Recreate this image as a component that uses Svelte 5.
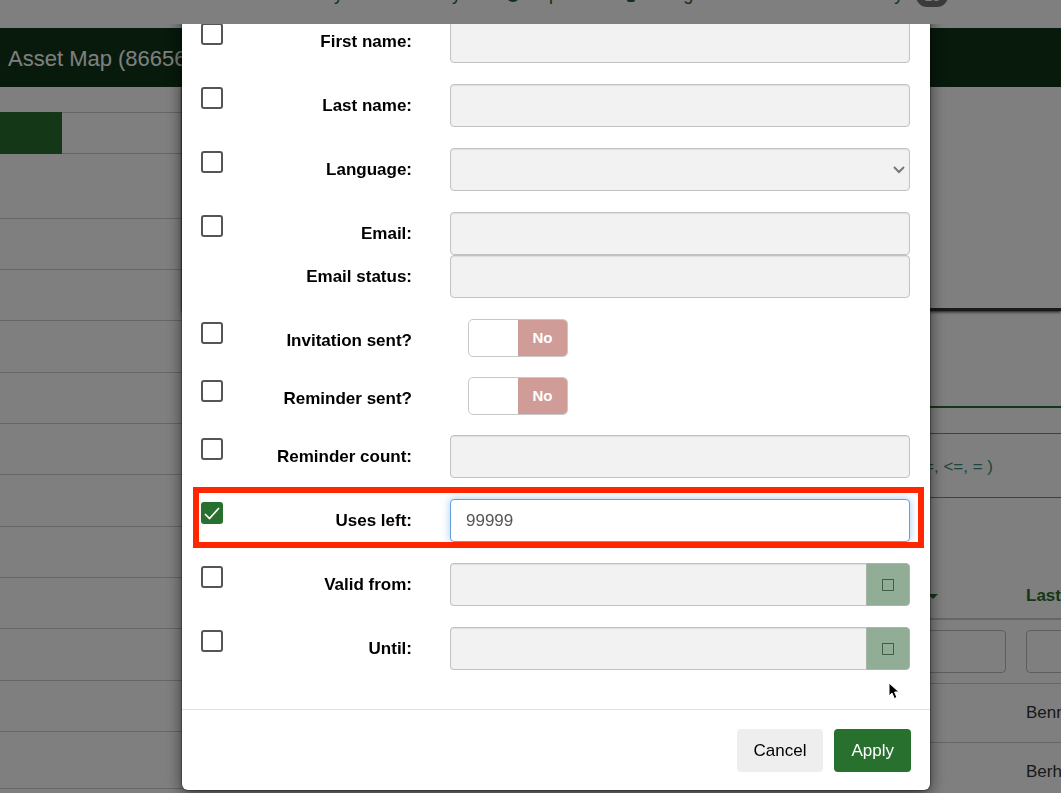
<script>
  const sidebarRows = Array.from({ length: 12 }, (_, i) => i);

  let fields = $state([
    { id: 'firstname', label: 'First name:', kind: 'text', on: false, value: '' },
    { id: 'lastname', label: 'Last name:', kind: 'text', on: false, value: '' },
    { id: 'language', label: 'Language:', kind: 'select', on: false, value: '' },
    { id: 'email', label: 'Email:', kind: 'text', on: false, value: '', joined: true },
    { id: 'emailstatus', label: 'Email status:', kind: 'text', noCheck: true, on: false, value: '' },
    { id: 'sent', label: 'Invitation sent?', kind: 'switch', on: false, value: false },
    { id: 'remindersent', label: 'Reminder sent?', kind: 'switch', on: false, value: false },
    { id: 'remindercount', label: 'Reminder count:', kind: 'text', on: false, value: '' },
    { id: 'usesleft', label: 'Uses left:', kind: 'text', on: true, value: '99999', marked: true },
    { id: 'validfrom', label: 'Valid from:', kind: 'date', on: false, value: '' },
    { id: 'validuntil', label: 'Until:', kind: 'date', on: false, value: '' }
  ]);
</script>

<div class="page">
  <nav class="topbar">
    <a href="#create">Create survey</a>
    <a href="#list">List surveys</a>
    <a href="#help" class="help"><span class="dot"></span>Help</a>
    <a href="#config" class="config"><span class="cog"></span>Configuration</a>
    <a href="#active" class="active-surveys">Active surveys <span class="count">13</span></a>
    <a href="#user" class="user">admin</a>
  </nav>
  <header class="titlebar">Asset Map (866564)</header>
  <div class="columns">
    <aside>
      <div class="tabs"><span class="tab active"></span><span class="tab"></span></div>
      <ul>
        {#each sidebarRows as row (row)}<li></li>{/each}
      </ul>
    </aside>
    <main>
      <div class="panel"></div>
      <div class="rule"></div>
      <p class="hint">You can use operators in the search filters (eg: &gt;, &lt;, &gt;=, &lt;=, = )</p>
      <table>
        <thead>
          <tr><th class="wide">Action</th><th>Status</th><th>First name<i class="caret"></i></th><th>Last name</th></tr>
          <tr class="filters">
            <td></td>
            <td><input aria-label="Filter status" /></td>
            <td><input aria-label="Filter first name" /></td>
            <td><input aria-label="Filter last name" /></td>
          </tr>
        </thead>
        <tbody>
          <tr><td></td><td></td><td></td><td>Bennett</td></tr>
          <tr><td></td><td></td><td></td><td>Berhane</td></tr>
        </tbody>
      </table>
    </main>
  </div>
</div>

<div class="backdrop">
  <div class="viewport">
    <div class="dialog" role="dialog" aria-modal="true" aria-label="Edit participants">
      <form>
        {#each fields as f (f.id)}
          <div class="row" class:joined={f.joined} class:short={f.kind === 'switch'}>
            {#if f.noCheck}
              <span></span>
            {:else}
              <input type="checkbox" class="check" bind:checked={f.on} aria-label={`Change ${f.label}`} />
            {/if}
            <label for={f.id}>{f.label}</label>
            {#if f.kind === 'text'}
              <input id={f.id} class="field" class:focused={f.on} type="text" disabled={!f.on} bind:value={f.value} />
            {:else if f.kind === 'select'}
              <div class="pick">
                <select id={f.id} class="field" disabled={!f.on} bind:value={f.value}><option value=""></option></select>
                <svg viewBox="0 0 12 8" width="12" height="8"><path d="M1 1l5 5 5-5" fill="none" stroke="#777" stroke-width="2" /></svg>
              </div>
            {:else if f.kind === 'switch'}
              <button type="button" id={f.id} class="switch" role="switch" aria-checked="false" disabled={!f.on}>
                <span></span><span class="off">No</span>
              </button>
            {:else}
              <div class="date">
                <input id={f.id} class="field" type="text" disabled={!f.on} bind:value={f.value} />
                <button type="button" aria-label="Open calendar" disabled={!f.on}><span></span></button>
              </div>
            {/if}
            {#if f.marked}<div class="mark"></div>{/if}
          </div>
        {/each}
      </form>
      <footer>
        <button type="button" class="btn">Cancel</button>
        <button type="button" class="btn primary">Apply</button>
      </footer>
    </div>
  </div>
</div>

<svg class="pointer" viewBox="0 0 12 18" width="12" height="18">
  <path d="M1 1v13l3-3 2.300 5.500 2.600-1.100L6.600 10H11z" fill="#000" stroke="#fff" stroke-width="1" />
</svg>

<style>
  :global(body) {
    margin: 0;
    overflow: hidden;
    background: #fff;
    font: 17px/22px "Liberation Sans", Arial, sans-serif;
  }
  * { box-sizing: border-box; }
  button, input, select { font: inherit; }

  .page { height: 100vh; overflow: hidden; color: #333; }
  .topbar {
    display: flex;
    align-items: flex-start;
    gap: 32px;
    height: 28px;
    padding-left: 231px;
    overflow: hidden;
    font-size: 18px;
    line-height: 24px;
    white-space: nowrap;
  }
  .topbar a { display: flex; margin-top: -18px; color: #265c34; text-decoration: none; }
  .topbar .help { margin-left: -4px; }
  .topbar .config { margin-left: 28px; }
  .topbar .active-surveys, .topbar .user { margin-left: 16px; }
  .dot, .cog { width: 14px; height: 14px; margin: 6px 2px 0 8px; border-radius: 7px; background: #265c34; }
  .cog { width: 8px; margin-right: 6px; border-radius: 2px; }
  .count {
    width: 32px;
    height: 22px;
    margin: 3px 0 0 4px;
    border-radius: 11px;
    background: #777;
    color: #fff;
    font-size: 14px;
    line-height: 22px;
    text-align: center;
  }
  .topbar .user { color: #8a5a3c; }
  .titlebar {
    height: 59px;
    padding-left: 8px;
    background: #0e3418;
    color: #fff;
    font-size: 22px;
    line-height: 62px;
  }
  .columns { display: grid; grid-template-columns: 182px minmax(0, 1fr); }
  aside { padding-top: 25px; }
  .tabs { display: flex; height: 42px; border: solid #ccc; border-width: 1px 0; }
  .tab { flex: 1; }
  .tab.active { flex: 0 0 62px; margin: -1px 0; background: #28702e; }
  ul { margin: 0; padding: 0; list-style: none; }
  li { height: 51px; border-bottom: 1px solid #ccc; }
  li:nth-child(3n + 4) { height: 52px; }
  li:first-child { height: 65px; }
  li:last-child { height: 57px; }

  .panel { height: 224px; border-bottom: 3px solid #333; box-shadow: 0 1px 3px #333; }
  .rule { height: 97px; border-bottom: 2px solid #28702e; }
  .hint {
    margin: 25px 0 0;
    padding: 22px 68px 19px 0;
    overflow: hidden;
    border: solid #4f9c8c;
    border-width: 1px 0;
    color: #3c8a7c;
    text-align: right;
    white-space: nowrap;
  }
  table { width: 1034px; margin-top: 75px; table-layout: fixed; border-collapse: collapse; }
  th, td { height: 59px; padding: 0 10px; border-bottom: 1px solid #ccc; text-align: left; }
  th { width: 200px; height: 46px; border-bottom-width: 2px; color: #28702e; }
  th.wide { width: 434px; }
  .filters td { height: 64px; }
  .filters input {
    display: block;
    width: 100%;
    height: 43px;
    border: 1px solid #bbb;
    border-radius: 4px;
    background: #fff;
  }
  .caret {
    display: inline-block;
    margin-left: 16px;
    border: 5px solid transparent;
    border-top-color: #28702e;
    border-bottom: 0;
    vertical-align: middle;
  }

  .backdrop { position: fixed; inset: 0; background: rgba(0, 0, 0, 0.5); }
  .viewport { height: 100%; padding: 0 131px 0 182px; margin-top: 24px; overflow: hidden; }
  .dialog {
    margin-top: -12px;
    padding-top: 8px;
    border-radius: 6px;
    background: #fff;
    box-shadow: 0 4px 16px rgba(0, 0, 0, 0.6), 0 0 2px #000;
    color: #000;
  }
  form { padding: 0 20px 18px 19px; }
  .row {
    position: relative;
    display: grid;
    grid-template-columns: 22px minmax(0, 227fr) minmax(0, 460fr);
    align-items: start;
    margin-bottom: 21px;
  }
  .row.joined { margin-bottom: 0; }
  .row.short { margin-bottom: 20px; }
  .check {
    appearance: none;
    width: 22px;
    height: 22px;
    margin: 3px 0 0;
    border: 2px solid #555;
    border-radius: 3px;
    background: #fff;
  }
  .check:checked {
    border-color: #28702e;
    background: #28702e url("data:image/svg+xml,%3Csvg xmlns='http://www.w3.org/2000/svg' viewBox='0 0 18 18'%3E%3Cpath d='M2 10l4.500 4.500L16 4' fill='none' stroke='white' stroke-width='1.700'/%3E%3C/svg%3E") center / 18px no-repeat;
  }
  label { padding: 11px 38px 0 0; font-weight: 700; text-align: right; white-space: nowrap; }
  .field {
    display: block;
    width: 100%;
    height: 43px;
    padding: 0 15px;
    border: 1px solid #c2c2c2;
    border-radius: 4px;
    background: #f2f2f2;
    box-shadow: inset 0 1px 1px rgba(0, 0, 0, 0.08);
    color: #555;
    opacity: 1;
    appearance: none;
  }
  .field.focused {
    border-color: #66a0dc;
    outline: 0;
    background: #fff;
    box-shadow: 0 0 8px rgba(102, 175, 233, 0.6);
  }
  .pick { display: grid; align-items: center; }
  .pick > * { grid-area: 1 / 1; }
  .pick svg { z-index: 1; justify-self: end; margin-right: 5px; }
  .switch {
    display: flex;
    width: 100px;
    height: 38px;
    margin-left: 18px;
    padding: 0;
    overflow: hidden;
    border: 1px solid #c8c8c8;
    border-radius: 5px;
    background: #fff;
  }
  .switch span { flex: 1; }
  .switch .off { background: #d09c97; color: #fff; font-size: 15px; font-weight: 700; line-height: 36px; }
  .date { display: grid; grid-template-columns: minmax(0, 1fr) 44px; }
  .date .field { border-right: 0; border-radius: 4px 0 0 4px; }
  .date button {
    display: grid;
    place-items: center;
    padding: 0;
    border: 1px solid #a8b5a9;
    border-radius: 0 4px 4px 0;
    background: #91ad95;
  }
  .date button span { width: 12px; height: 12px; border: 1px solid #435c46; }
  .mark { position: absolute; inset: -12px -14px -6px -8px; border: 6px solid #ff2600; pointer-events: none; }
  footer {
    display: flex;
    justify-content: flex-end;
    gap: 11px;
    padding: 19px 19px 18px;
    border-top: 1px solid #e2e2e2;
  }
  .btn { height: 43px; padding: 0 17px; border: 0; border-radius: 4px; background: #eee; color: #000; }
  .btn.primary { background: #28702e; color: #fff; }
  .pointer { position: fixed; left: 888px; top: 682px; }
</style>
